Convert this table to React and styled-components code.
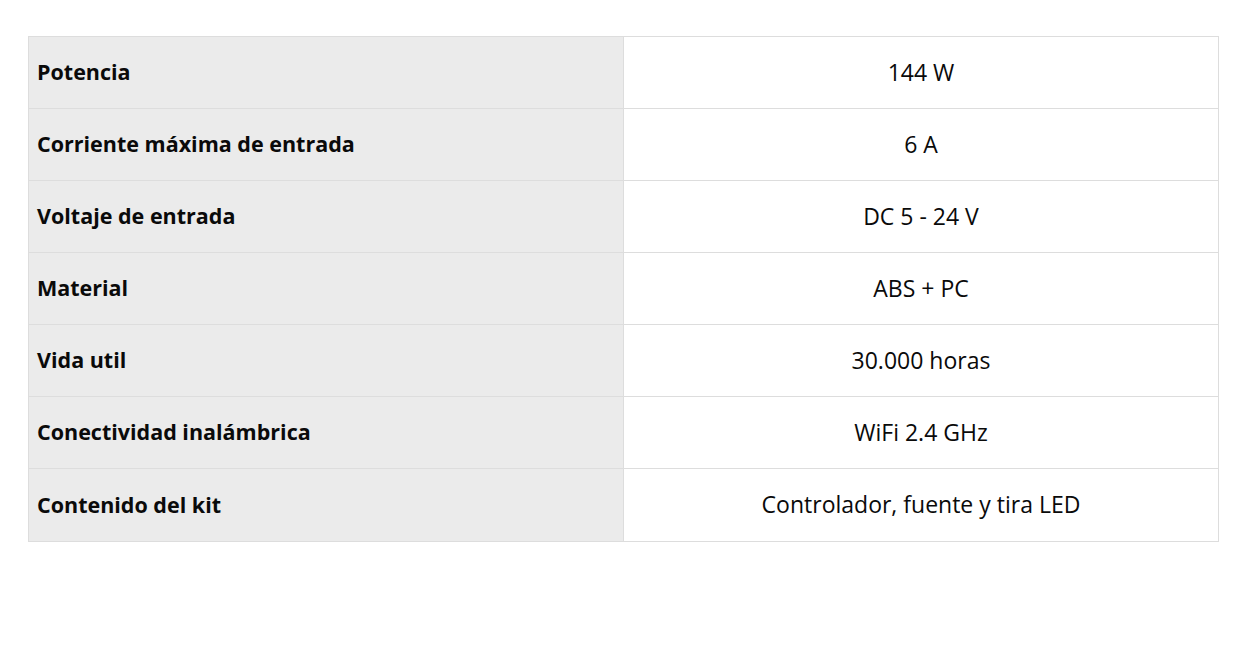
import styled, { createGlobalStyle } from "styled-components";

const GlobalStyle = createGlobalStyle`
  body {
    margin: 0;
    background: #ffffff;
    font-family: "Open Sans", "Liberation Sans", sans-serif;
  }
`;

const Page = styled.div`
  padding: 36px 0 0 28px;
`;

const Table = styled.div`
  width: 1191px;
  display: grid;
  grid-template-columns: 595px 1fr;
  border: 1px solid #dddddd;
  box-sizing: border-box;
`;

const Cell = styled.div`
  height: 72px;
  box-sizing: border-box;
  display: flex;
  align-items: center;
  padding-bottom: 2px;
  border-bottom: ${(props) => (props.last ? "none" : "1px solid #dddddd")};
  color: #0a0a0a;
`;

const Label = styled(Cell)`
  background: #ebebeb;
  border-right: 1px solid #dddddd;
  padding-left: 8px;
  font-weight: 700;
  font-size: 21.5px;
`;

const Value = styled(Cell)`
  background: #ffffff;
  justify-content: center;
  font-weight: 400;
  font-size: 23px;
`;

const rows = [
  ["Potencia", "144 W"],
  ["Corriente máxima de entrada", "6 A"],
  ["Voltaje de entrada", "DC 5 - 24 V"],
  ["Material", "ABS + PC"],
  ["Vida util", "30.000 horas"],
  ["Conectividad inalámbrica", "WiFi 2.4 GHz"],
  ["Contenido del kit", "Controlador, fuente y tira LED"],
];

export default function App() {
  return (
    <>
      <GlobalStyle />
      <Page>
        <Table>
          {rows.map(([label, value], i) => {
            const last = i === rows.length - 1;
            return [
              <Label key={label} last={last}>
                {label}
              </Label>,
              <Value key={label + "-v"} last={last}>
                {value}
              </Value>,
            ];
          })}
        </Table>
      </Page>
    </>
  );
}
